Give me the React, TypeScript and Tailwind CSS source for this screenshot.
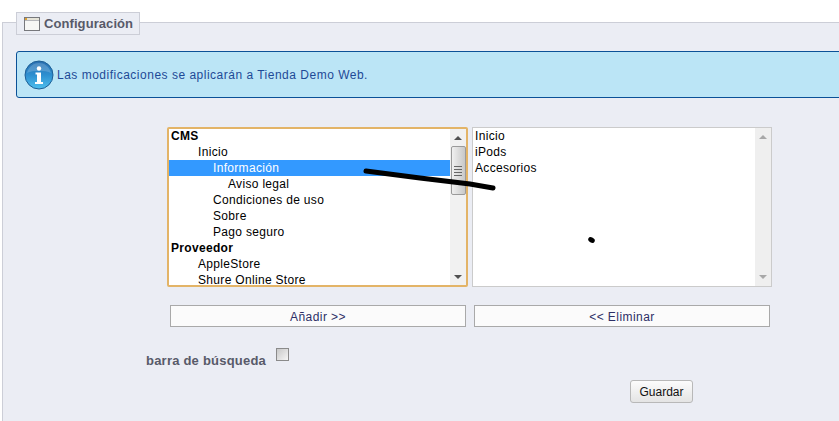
const leftOptions = [
  { label: 'CMS', indent: 2, bold: true },
  { label: 'Inicio', indent: 29 },
  { label: 'Información', indent: 44, selected: true },
  { label: 'Aviso legal', indent: 59 },
  { label: 'Condiciones de uso', indent: 44 },
  { label: 'Sobre', indent: 44 },
  { label: 'Pago seguro', indent: 44 },
  { label: 'Proveedor', indent: 2, bold: true },
  { label: 'AppleStore', indent: 29 },
  { label: 'Shure Online Store', indent: 29 },
];

const rightOptions = ['Inicio', 'iPods', 'Accesorios'];

const WindowIcon = () => (
  <svg width="16" height="14" viewBox="0 0 16 14" className="shrink-0">
    <rect x="0.5" y="0.5" width="15" height="13" fill="#f7f7f5" stroke="#77787c" />
    <rect x="1" y="1" width="14" height="2" fill="#e6e4d8" />
    <rect x="1" y="1" width="2" height="2" fill="#e0a030" />
    <rect x="1" y="3" width="14" height="1" fill="#b5b6ba" />
  </svg>
);

const InfoIcon = () => (
  <svg width="30" height="30" viewBox="0 0 30 30" className="shrink-0">
    <defs>
      <linearGradient id="infoBg" x1="0" y1="0" x2="0" y2="1">
        <stop offset="0" stopColor="#2a6fb0" />
        <stop offset="0.5" stopColor="#2d8fd0" />
        <stop offset="1" stopColor="#4fc0ee" />
      </linearGradient>
    </defs>
    <circle cx="15" cy="15" r="14" fill="url(#infoBg)" stroke="#1d5f96" />
    <path d="M3 13C5 6 10 3 15 3s10 3 12 10c-6-3-18-3-24 0z" fill="#ffffff" opacity="0.18" />
    <circle cx="15" cy="8.5" r="2.2" fill="#ffffff" />
    <path d="M11.5 12.5h5.5v9.5h2v2h-8v-2h2v-7.500h-1.500z" fill="#ffffff" />
  </svg>
);

const Arrow = ({ up, color }: { up?: boolean; color: string }) => (
  <svg width="8" height="4" viewBox="0 0 8 4">
    <path d={up ? 'M4 0l4 4H0z' : 'M0 0h8L4 4z'} fill={color} />
  </svg>
);

export default function App() {
  return (
    <div className="relative h-[421px] w-[839px] overflow-hidden bg-white font-['Liberation_Sans',Arial,sans-serif] text-[12px]">
      <div className="ml-[2px] mt-[22px] h-[399px] w-[900px] border-l border-t border-[#ccced7] bg-[#ebedf4] pl-[13px]">
        <div className="mt-[-11px] flex h-[23px] w-[124px] items-center gap-[4px] border border-[#ccced7] bg-[#ebedf4] pl-[7px] text-[13px] font-bold tracking-[0.08px] text-[#585a69]">
          <WindowIcon />
          <span>Configuración</span>
        </div>

        <div className="mt-[16px] flex h-[47px] items-center gap-[3px] rounded-[3px] border border-[#0b5197] bg-[#bbe5f6] pl-[7px] tracking-[0.5px] text-[#1e4a97]">
          <InfoIcon />
          <span>Las modificaciones se aplicarán a Tienda Demo Web.</span>
        </div>

        <div className="ml-[151px] mt-[29px] flex w-[605px] gap-[4px]">
          <div className="flex h-[160px] w-[301px] overflow-hidden rounded-[2px] border-2 border-[#e3b467] bg-white">
            <ul className="mt-[-1px] flex-1 tracking-[0.32px] text-black">
              {leftOptions.map((o) => (
                <li
                  key={o.label}
                  className={`h-[16px] leading-[16px] ${o.bold ? 'font-bold' : ''} ${o.selected ? 'bg-[#3399ff] text-white' : ''}`}
                  style={{ paddingLeft: o.indent }}
                >
                  {o.label}
                </li>
              ))}
            </ul>
            <div className="flex w-[16px] flex-col items-center bg-[#f1f1f1]">
              <div className="flex h-[17px] items-center justify-center">
                <Arrow up color="#505050" />
              </div>
              <div className="flex h-[49px] w-[15px] flex-col items-center justify-center gap-[2px] rounded-[2px] border border-[#9a9a9a] bg-gradient-to-r from-[#f0f0f0] to-[#c8c8c8]">
                <span className="h-px w-[8px] bg-[#666]" />
                <span className="h-px w-[8px] bg-[#666]" />
                <span className="h-px w-[8px] bg-[#666]" />
                <span className="h-px w-[8px] bg-[#666]" />
              </div>
              <div className="mb-[6px] mt-auto">
                <Arrow color="#505050" />
              </div>
            </div>
          </div>

          <div className="flex h-[160px] w-[300px] overflow-hidden border border-[#cbcbcb] bg-white">
            <ul className="flex-1 pl-[2px] tracking-[0.32px] text-black">
              {rightOptions.map((o) => (
                <li key={o} className="h-[16px] leading-[16px]">
                  {o}
                </li>
              ))}
            </ul>
            <div className="flex w-[16px] flex-col items-center justify-between bg-[#efefef] py-[7px]">
              <Arrow up color="#a8a8a8" />
              <Arrow color="#a8a8a8" />
            </div>
          </div>
        </div>

        <div className="ml-[154px] mt-[18px] flex w-[600px] gap-[8px] tracking-[0.45px] text-[#2d2f66]">
          <button className="h-[22px] w-[296px] border border-[#a9a9a9] bg-[#fbfbfb] pt-[1px]">Añadir &gt;&gt;</button>
          <button className="h-[22px] w-[296px] border border-[#a9a9a9] bg-[#fbfbfb] pt-[1px]">&lt;&lt; Eliminar</button>
        </div>

        <div className="ml-[130px] mt-[21px] flex h-[14px] items-start">
          <span className="mt-[5px] text-[13px] font-bold leading-[16px] tracking-[0.22px] text-[#585a69]">barra de búsqueda</span>
          <span className="ml-[10px] h-[13px] w-[13px] border border-[#8a8a8a] bg-gradient-to-br from-[#c8c8c8] to-[#f6f6f6]" />
        </div>

        <div className="ml-[614px] mt-[18px]">
          <button className="h-[23px] w-[63px] rounded-[3px] border border-[#b8b8b8] bg-gradient-to-b from-[#fcfcfc] to-[#e4e4e4] text-[#111]">Guardar</button>
        </div>
      </div>

      {/* trazos dibujados encima de la captura */}
      <svg width="839" height="421" viewBox="0 0 839 421" className="pointer-events-none absolute left-0 top-0">
        <path d="M366 171L420 178L470 184L493 188" fill="none" stroke="#000" strokeWidth="5" strokeLinecap="round" />
        <ellipse cx="591.500" cy="240" rx="3.500" ry="2.500" fill="#000" transform="rotate(30 591.500 240)" />
      </svg>
    </div>
  );
}
